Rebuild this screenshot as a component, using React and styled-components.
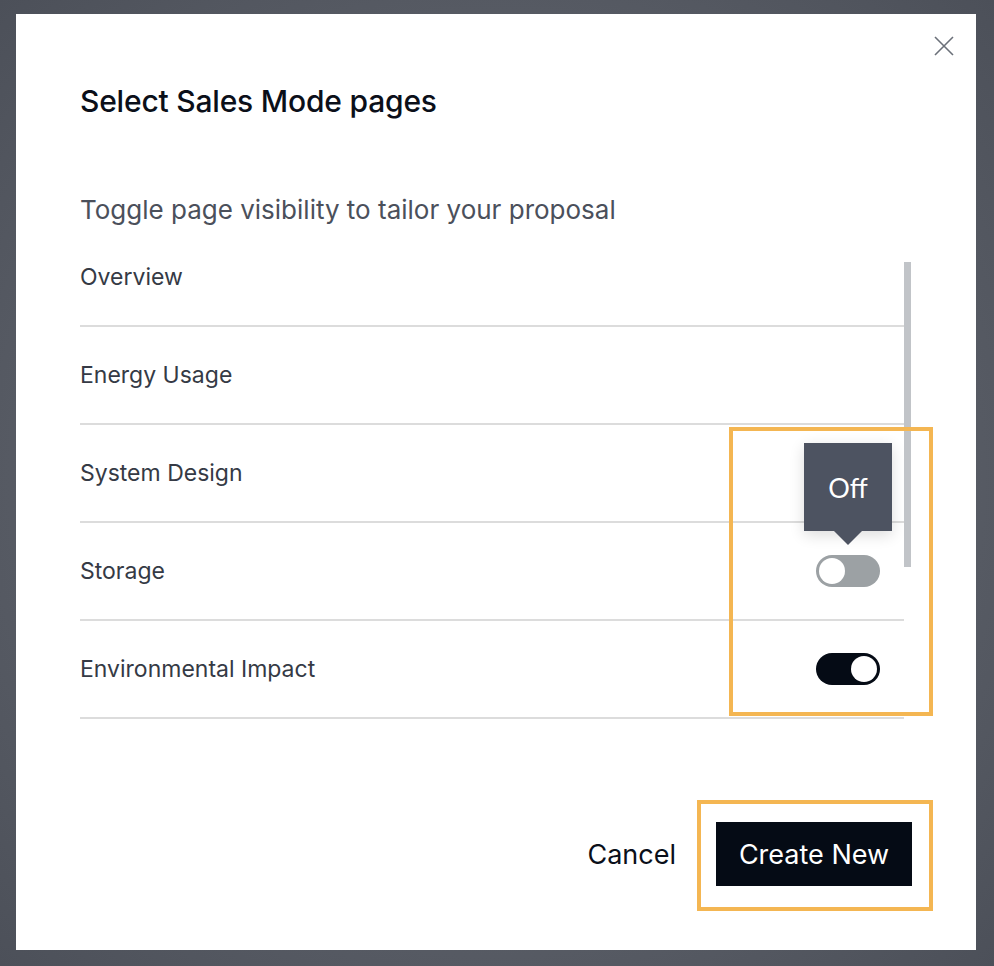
import React from "react";
import styled, { createGlobalStyle } from "styled-components";

const Global = createGlobalStyle`
  html, body { margin: 0; padding: 0; }
  body {
    background: radial-gradient(ellipse at 50% 50%, #5f636c 0%, #595d66 60%, #4c5059 100%);
    font-family: Inter, "Noto Sans", Arial, sans-serif;
    -webkit-font-smoothing: antialiased;
  }
`;

const Backdrop = styled.div`
  width: 994px;
  height: 966px;
  box-sizing: border-box;
  padding: 14px 18px 16px 16px;
`;

const Modal = styled.div`
  position: relative;
  width: 960px;
  height: 936px;
  background: #ffffff;
  box-sizing: border-box;
  padding: 69px 64px 0 64px;
  display: flex;
  flex-direction: column;
`;

const Close = styled.button`
  position: absolute;
  top: 22px;
  right: 22px;
  width: 20px;
  height: 20px;
  padding: 0;
  border: 0;
  background: none;
  display: flex;
  align-items: center;
  justify-content: center;
`;

const Title = styled.h2`
  margin: 0;
  font-size: 30px;
  line-height: 36px;
  font-weight: 500;
  color: #0b0f19;
  letter-spacing: -0.2px;
`;

const Subtitle = styled.p`
  margin: 76px 0 0 0;
  font-size: 26px;
  line-height: 30px;
  font-weight: 400;
  color: #4b505b;
`;

const ListWrap = styled.div`
  position: relative;
  margin-top: 4px;
  width: 832px;
  height: 490px;
`;

const List = styled.ul`
  list-style: none;
  margin: 0;
  padding: 0;
  width: 824px;
`;

const Row = styled.li`
  position: relative;
  height: 96px;
  border-bottom: 2px solid #dcdcdc;
  display: flex;
  align-items: center;
  justify-content: space-between;
  padding-right: 24px;
`;

const RowLabel = styled.span`
  font-size: 23px;
  line-height: 28px;
  color: #353a45;
`;

const Thumb = styled.div`
  position: absolute;
  left: 824px;
  top: 33px;
  width: 7px;
  height: 305px;
  background: #c1c4c8;
`;

const ToggleWrap = styled.div`
  position: relative;
  display: flex;
`;

const Toggle = styled.span`
  position: relative;
  width: 64px;
  height: 32px;
  border-radius: 16px;
  background: ${(p) => (p.$on ? "#050b15" : "#9ca1a4")};
  &::after {
    content: "";
    position: absolute;
    top: 3px;
    left: ${(p) => (p.$on ? "35px" : "3px")};
    width: 26px;
    height: 26px;
    border-radius: 50%;
    background: #ffffff;
  }
`;

const Tooltip = styled.div`
  position: absolute;
  left: -12px;
  bottom: 56px;
  width: 88px;
  height: 88px;
  background: #4d5361;
  color: #ffffff;
  font-family: Lato, "Open Sans", sans-serif;
  font-size: 27px;
  display: flex;
  align-items: center;
  justify-content: center;
  box-shadow: 0 4px 14px rgba(0, 0, 0, 0.14);
  &::after {
    content: "";
    position: absolute;
    left: 30px;
    top: 88px;
    border-left: 14px solid transparent;
    border-right: 14px solid transparent;
    border-top: 14px solid #4d5361;
  }
`;

const Footer = styled.div`
  margin-top: 103px;
  display: flex;
  justify-content: flex-end;
  align-items: center;
  gap: 40px;
`;

const CancelBtn = styled.button`
  border: 0;
  background: none;
  padding: 0;
  font-family: inherit;
  font-size: 27px;
  font-weight: 400;
  color: #0a0f1a;
`;

const PrimaryBtn = styled.button`
  border: 0;
  width: 196px;
  height: 64px;
  background: #050b15;
  color: #ffffff;
  font-family: inherit;
  font-size: 27px;
  font-weight: 400;
`;

const Highlight = styled.div`
  position: absolute;
  left: ${(p) => p.$x}px;
  top: ${(p) => p.$y}px;
  width: ${(p) => p.$w}px;
  height: ${(p) => p.$h}px;
  box-sizing: border-box;
  border: 4px solid #f4b652;
  pointer-events: none;
`;

const pages = [
  { name: "Overview" },
  { name: "Energy Usage" },
  { name: "System Design" },
  { name: "Storage", toggle: false, tip: "Off" },
  { name: "Environmental Impact", toggle: true },
];

export default function App() {
  return (
    <>
      <Global />
      <Backdrop>
        <Modal>
          <Close aria-label="Close">
            <svg width="20" height="20" viewBox="0 0 20 20">
              <path d="M1 1 L19 19 M19 1 L1 19" stroke="#6b7079" strokeWidth="1.6" />
            </svg>
          </Close>
          <Title>Select Sales Mode pages</Title>
          <Subtitle>Toggle page visibility to tailor your proposal</Subtitle>
          <ListWrap>
            <List>
              {pages.map((p) => (
                <Row key={p.name}>
                  <RowLabel>{p.name}</RowLabel>
                  {p.toggle !== undefined && (
                    <ToggleWrap>
                      {p.tip && <Tooltip>{p.tip}</Tooltip>}
                      <Toggle $on={p.toggle} />
                    </ToggleWrap>
                  )}
                </Row>
              ))}
            </List>
            <Thumb />
          </ListWrap>
          <Footer>
            <CancelBtn>Cancel</CancelBtn>
            <PrimaryBtn>Create New</PrimaryBtn>
          </Footer>
          <Highlight $x={713} $y={413} $w={204} $h={289} />
          <Highlight $x={681} $y={786} $w={236} $h={111} />
        </Modal>
      </Backdrop>
    </>
  );
}
